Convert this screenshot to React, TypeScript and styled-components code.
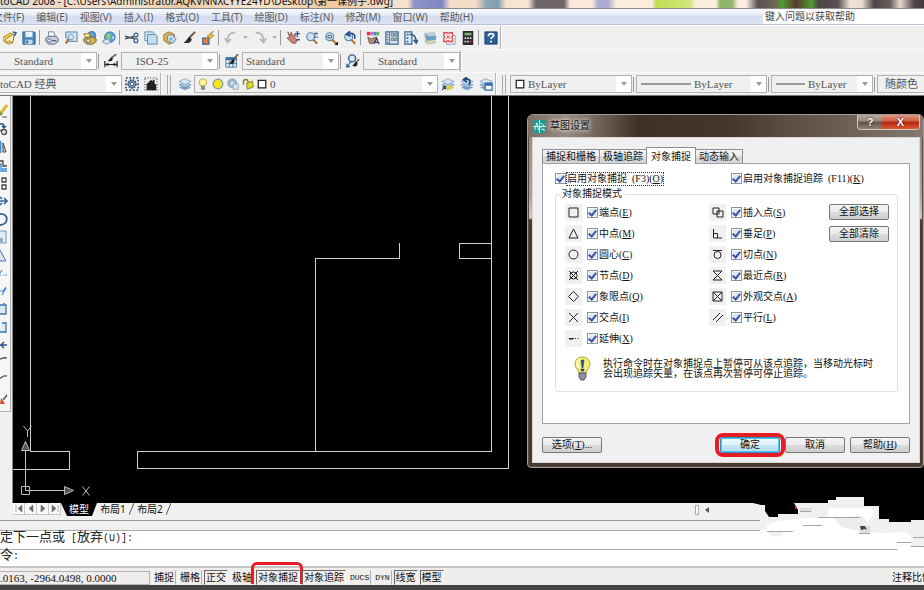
import React from 'react';
import styled, { createGlobalStyle, css } from 'styled-components';

const SONG = '"Liberation Serif", "Noto Sans CJK SC", serif';
const UI = '"Noto Sans", "Noto Sans CJK SC", sans-serif';
const MONO = '"Liberation Mono", "Noto Sans CJK SC", monospace';

const GlobalStyle = createGlobalStyle`
  * { box-sizing: border-box; }
  html, body { margin: 0; height: 100%; overflow: hidden; }
  button, select, input { font: inherit; color: inherit; margin: 0; padding: 0; }
`;

const Page = styled.div`
  position: relative;
  display: flex;
  flex-direction: column;
  height: 100vh;
  overflow: hidden;
  background: #f0f0f0;
  font: 10px/12px ${SONG};
  color: #111;
  svg { display: block; flex: none; }
`;

/* ---------- window chrome ---------- */

const TitleBar = styled.header`
  display: flex;
  align-items: flex-end;
  flex: none;
  height: 9px;
  overflow: hidden;
  border-bottom: 1px solid #8c8a8a;
  font: 10px/13px ${UI};
  color: #111;
  white-space: nowrap;
  background: linear-gradient(90deg, #d9dcd8 0, #f3d9c4 60px, #efe3d6 130px, #e9c8a4 180px, #f5e4d2 250px,
    #f1c9a0 330px, #f6e3d4 400px, #f6dfcb 408px, #8f93c9 414px, #7d86c4 442px, #f5ddc8 450px, #f6dcc6 476px,
    #8da9b4 486px, #7f9fb0 498px, #f7e0cc 506px, #f8e6d6 528px, #6f6468 536px, #6f6468 564px, #fae9da 570px,
    #fae9da 592px, #a9acd0 598px, #a9acd0 608px, #fcecdc 616px, #fcecdc 652px, #bfdd55 656px, #d3e67c 690px,
    #fbeedd 696px, #fbeedd 716px, #8fb56a 720px, #8fb56a 732px, #fbeee0 738px, #fbeee0 746px, #565056 758px,
    #71684f 776px, #4f9c31 782px, #5b3a30 796px, #4f9c31 812px, #4a4547 818px, #57504f 838px, #f2e4d8 850px,
    #e9dccf 862px, #4e4747 874px, #675d5a 890px, #e8d9cd 900px, #504848 914px, #3f3939 924px);
`;

const MenuBar = styled.nav`
  display: flex;
  align-items: center;
  flex: none;
  height: 16px;
  background: linear-gradient(#f8fafd 0, #e9eef8 35%, #d5ddf0 50%, #dbe3f4 100%);
  border-bottom: 1px solid #b9c3d8;
  font: 10px/14px ${UI};
  color: #5a5a5a;
`;

const MenuList = styled.div`
  display: flex;
  gap: 12px;
  margin-left: -7px;
  flex: 1;
`;

const MenuItem = styled.button`
  border: 0;
  background: none;
  white-space: nowrap;
`;

const HelpBox = styled.input`
  width: 161px;
  height: 14px;
  border: 0;
  padding-left: 2px;
  background: #fff;
  font: 10px/14px ${SONG};
  &::placeholder { color: #444; opacity: 1; }
`;

const ToolRow = styled.div<{ $h: number }>`
  display: flex;
  align-items: center;
  flex: none;
  height: ${p => p.$h}px;
  border-top: 1px solid #fafafa;
`;

const ToolBar = styled.div<{ $last?: boolean }>`
  display: flex;
  align-items: center;
  align-self: stretch;
  ${p => !p.$last && css`border-right: 1px solid #b4b4b4; box-shadow: 1px 0 #fff;`}
`;

const ToolButton = styled.button<{ $w?: number }>`
  display: grid;
  place-items: center;
  width: ${p => p.$w ?? 19}px;
  height: 18px;
  border: 0;
  background: none;
`;

const Rule = styled.span`
  width: 1px;
  height: 15px;
  margin: 0 2px 0 1px;
  background: #999;
`;

const Grip = styled.span`
  width: 4px;
  height: 19px;
  border: solid #aaa;
  border-width: 0 1px;
  margin: 0 4px 0 6px;
`;

const ComboBox = styled.label<{ $w: number; $pad?: number; $open?: boolean }>`
  display: flex;
  align-items: center;
  width: ${p => p.$w}px;
  height: 18px;
  padding-left: ${p => p.$pad ?? 4}px;
  border: 1px solid #b2b2b2;
  ${p => p.$open && css`border-left: 0;`}
  background: #f0f0f0;
  font: 11px/14px ${SONG};
  color: #555;
  gap: 3px;
`;

const ComboSelect = styled.select`
  flex: 1;
  min-width: 0;
  height: 16px;
  appearance: none;
  border: 0;
  background: none;
`;

const ComboArrow = styled.span`
  display: grid;
  place-items: center;
  width: 15px;
  height: 16px;
  background: #fff;
`;

function Combo({ value, label, w, pad, open, arrow = true, children }: any) {
  return (
    <ComboBox $w={w} $pad={pad} $open={open}>
      {children}
      <ComboSelect aria-label={label} defaultValue={value}>
        <option>{value}</option>
      </ComboSelect>
      {arrow && (
        <ComboArrow>
          <svg width="6" height="4"><path d="M0 0h6L3 4z" fill="#999" /></svg>
        </ComboArrow>
      )}
    </ComboBox>
  );
}

/* ---------- icons ---------- */

const lens = (
  <>
    <path d="M9.5 10l4.5 4.5" stroke="#b07b35" strokeWidth="2.6" />
    <circle cx="6.5" cy="6.5" r="4.5" fill="#cfe4f3" stroke="#5f87a8" strokeWidth="1.4" />
  </>
);

const stack = (
  <>
    <path d="M8 9l7 3-7 3-7-3z" fill="#7b9fc4" />
    <path d="M8 6l7 3-7 3-7-3z" fill="#a9c4df" stroke="#5b83ad" strokeWidth=".6" />
    <path d="M8 2l7 3-7 4-7-4z" fill="#d4e3f1" stroke="#5b83ad" strokeWidth=".6" />
  </>
);

const brush = (
  <>
    <path d="M15 1L8 8" stroke="#6a5646" strokeWidth="2.2" />
    <path d="M9 7c-3 0-3 4-7 6 4 2 9 0 9-4z" fill="#2a2625" />
  </>
);

const ICONS: Record<string, React.ReactNode> = {
  open: (
    <>
      <path d="M0 7l9-5 2 2v9l-4 2-7-4z" fill="#f0d166" stroke="#a78123" />
      <path d="M3 9l10-6-2 11-4-3-3 3z" fill="#fff3bb" stroke="#8d6c18" />
      <path d="M11 1l4 1-2 4" fill="none" stroke="#315f93" strokeWidth="1.6" />
    </>
  ),
  save: (
    <>
      <path d="M1 1h13l1 1v13H1z" fill="#4f86b9" stroke="#2c5c8c" />
      <path d="M4 1h8v6H4z" fill="#e9f2f9" />
      <path d="M4 10h8v5H4z" fill="#c5d8e8" />
      <path d="M5 11h2v3H5z" fill="#2c5c8c" />
    </>
  ),
  print: (
    <>
      <path d="M4 1h6l2 6H4z" fill="#fff" stroke="#667a99" />
      <path d="M1 8l3-2h9l2 3v3l-4 3H4l-3-3z" fill="#c9cfdd" stroke="#546079" />
      <circle cx="5" cy="11" r="2" fill="#eef" stroke="#546079" />
      <path d="M8 11h5" stroke="#546079" strokeWidth="1.4" />
    </>
  ),
  preview: (
    <>
      <path d="M2 1h13v11H6l-4-4z" fill="#b9d6ea" stroke="#5785ad" />
      <path d="M4 3h9v7H6z" fill="#e3f1fa" />
      <path d="M6 9l-4 5" stroke="#a56b3a" strokeWidth="2.4" />
      <circle cx="8" cy="7" r="3" fill="#d7ebf7" stroke="#668fb0" />
    </>
  ),
  publish: (
    <>
      <circle cx="10" cy="5" r="4.5" fill="#5e9fd0" stroke="#2c659b" />
      <path d="M1 3h6l2 5H3z" fill="#ffe58a" stroke="#9b7a20" />
      <path d="M1 9l4-2h7l3 2v3l-4 3H5l-4-3z" fill="#d3b84f" stroke="#5c4f30" />
      <circle cx="6" cy="11" r="2" fill="#fff" stroke="#5c4f30" />
    </>
  ),
  globe: (
    <>
      <circle cx="9" cy="7" r="6" fill="#5a9fd8" stroke="#2d6ca5" />
      <path d="M5 4c2-2 5-1 5 1s-2 2-1 4-4 1-4-1z" fill="#8ccf73" />
      <path d="M11 7l3-1-1 4z" fill="#e3f5d9" />
      <path d="M1 11l5-2 4 3-4 3-5-2z" fill="#dfe8f1" stroke="#7189a5" />
    </>
  ),
  cut: (
    <>
      <path d="M0 6l11 3M0 9l11-3" stroke="#3d4b5c" strokeWidth="1.5" />
      <circle cx="12.5" cy="4.5" r="2.2" fill="none" stroke="#3b5d87" strokeWidth="1.4" />
      <circle cx="12.5" cy="11" r="2.2" fill="none" stroke="#3b5d87" strokeWidth="1.4" />
    </>
  ),
  copy: (
    <>
      <path d="M1 1h9l2 2v8H1z" fill="#d7e7f4" stroke="#4f82b2" />
      <path d="M4 4h9l2 2v9H4z" fill="#c4dcee" stroke="#4f82b2" />
    </>
  ),
  paste: (
    <>
      <path d="M1 4l6-3 6 3v8l-6 3-6-4z" fill="#e8b84c" stroke="#8b6721" />
      <path d="M5 5l5-1 5 5-4 5-6-3z" fill="#cde0f0" stroke="#4f7aa4" />
      <circle cx="9" cy="9" r="2" fill="#8bb0d0" />
    </>
  ),
  brush,
  match: (
    <>
      <path d="M2 8h7v7H2z" fill="#f07f3c" stroke="#355f90" strokeWidth="1.4" />
      <path d="M14 0L7 6l3 1-3 5 8-7-4-1z" fill="#f5c93b" stroke="#8b5f15" strokeWidth=".7" />
    </>
  ),
  undo: <path d="M13 2C6 1 4 6 4 12M1 8l3 5 4-4" fill="none" stroke="#b5b5b5" strokeWidth="2" />,
  redo: <path d="M3 2c7-1 9 4 9 10M8 9l4 4 3-5" fill="none" stroke="#b5b5b5" strokeWidth="2" />,
  pan: (
    <>
      <path d="M2 1l3 4 1-4 2 5 3-3-1 5 3 2-2 4H7L1 8l3-1z" fill="#c9827a" stroke="#7b4a49" strokeWidth=".8" />
      <path d="M13 0v7M10 3h6M12 10h4" stroke="#2f5c90" strokeWidth="1.5" />
    </>
  ),
  zoom: <>{lens}<path d="M10 3h5M12.5 1v4M10 7h5" stroke="#2f5c90" /></>,
  zoomwin: <>{lens}<path d="M4.5 5h4v3h-4z" fill="none" stroke="#355b80" /><path d="M16 12v4h-4z" fill="#111" /></>,
  zoomprev: <>{lens}<path d="M13 9c2-5-2-8-8-5M8 0L4 4l5 2" fill="none" stroke="#22508a" strokeWidth="1.8" /></>,
  props: (
    <>
      <path d="M1 1h4v4H1z" fill="#e33" /><path d="M5 1h4v4H5z" fill="#d6c" />
      <path d="M9 1h3v4H9z" fill="#48d" /><path d="M12 1h3v4h-3z" fill="#5b4" />
      <path d="M2 7l4 2 5-2 2 2-5 5H4z" fill="#b98c70" stroke="#6e4e42" />
      <path d="M9 15l3-7 3 7M10 13h4" fill="none" stroke="#243e66" strokeWidth="1.3" />
    </>
  ),
  center: (
    <>
      <path d="M1 1h14v14H1z" fill="#dce8f2" stroke="#3c6898" strokeWidth="1.4" />
      <path d="M5 1v14" stroke="#3c6898" />
      <path d="M2 4h2M2 7h2M2 10h2M2 13h2" stroke="#254f7e" />
      <path d="M7 3h3v3H7zM11 3h3v3h-3zM7 8h3v3H7zM11 8h3v3h-3z" fill="#b4bf86" stroke="#3b5e83" strokeWidth=".7" />
    </>
  ),
  palette: (
    <>
      <path d="M1 1h8v14H1z" fill="#dce8f2" stroke="#3c6898" strokeWidth="1.4" />
      <path d="M3 3h2v2H3zM3 7h2v2H3zM3 11h2v2H3z" fill="#3c6898" />
      <path d="M6 4c6-1 8 4 8 9M11 10l3 4 2-4" fill="none" stroke="#28558b" strokeWidth="1.6" />
    </>
  ),
  sheet: (
    <>
      <path d="M1 2l13-1v9L3 14z" fill="#b7cad6" />
      <path d="M2 3c4 4 8 3 13 2v5L4 11z" fill="#6b9ec2" />
      <path d="M2 12l10-2 3 3-9 2z" fill="#d9d6b0" stroke="#8b9fa8" strokeWidth=".6" />
    </>
  ),
  markup: (
    <>
      <path d="M5 5h10v10H5z" fill="#eee" stroke="#8898a8" />
      <path d="M2 2h4l1 1 2-1h3v4l-1 1 1 2v3H8L7 11l-2 1H2V8l1-1-1-2z" fill="#fdeeee" stroke="#e04e57" strokeWidth="1.5" />
      <path d="M5 5l4 4M9 5L5 9" stroke="#d33" />
    </>
  ),
  calc: (
    <>
      <path d="M2 0h12v16H2z" fill="#2d2a2a" />
      <path d="M4 2h8v3H4z" fill="#77b57a" />
      <path d="M4 7h2v2H4zM7 7h2v2H7zM10 7h2v2h-2zM4 11h2v2H4zM7 11h2v2H7z" fill="#d9d9d9" />
      <path d="M10 11h2v2h-2z" fill="#d33" />
    </>
  ),
  help: (
    <>
      <path d="M1 1h14v14H1z" fill="#2a6096" stroke="#174170" />
      <path d="M5 6c0-4 6-4 6-1 0 2-3 2-3 4M8 11v2" fill="none" stroke="#fff" strokeWidth="2" />
    </>
  ),
  dimstyle: (
    <>
      <path d="M1 8v7M15 8v7M1 12h14" stroke="#222" strokeWidth="1.4" />
      <path d="M1 12l4-2v4zM15 12l-4-2v4z" fill="#222" />
      <path d="M14 0L8 5" stroke="#7a614e" strokeWidth="2" /><path d="M9 4c-3 1-3 3-5 4 3 1 6 0 6-3z" fill="#222" />
    </>
  ),
  tablestyle: (
    <>
      <path d="M1 4h12v11H1z" fill="#e5f0f8" stroke="#3c75ac" />
      <path d="M1 4h12v3H1z" fill="#3c75ac" />
      <path d="M1 11h12M5 7v8M9 7v8" stroke="#3c75ac" />
      <path d="M15 0L9 7" stroke="#7a614e" strokeWidth="2" /><path d="M10 6c-3 0-3 3-5 5 4 1 6-1 6-4z" fill="#222" />
    </>
  ),
  leader: (
    <>
      <circle cx="7" cy="5" r="4" fill="#dbe9f4" stroke="#2f6398" strokeWidth="1.6" />
      <path d="M1 15l5-7M1 11v4l4-1" fill="none" stroke="#2f6398" strokeWidth="1.4" />
      <path d="M15 6l-4 4" stroke="#7a614e" strokeWidth="2" /><path d="M12 9c-3 0-2 3-5 4 4 3 7 0 6-3z" fill="#222" />
    </>
  ),
  gear: (
    <>
      <path d="M1 1h14v14H1z" fill="none" stroke="#3a5675" strokeWidth="2" strokeDasharray="2 2" />
      <circle cx="8" cy="8" r="4.5" fill="#8aa4bb" stroke="#33506f" strokeWidth="2" strokeDasharray="2 1" />
      <circle cx="8" cy="8" r="2" fill="#f0f0f0" stroke="#33506f" />
    </>
  ),
  home: (
    <>
      <path d="M1 1h14v14H1z" fill="none" stroke="#777" strokeWidth="2" strokeDasharray="1 2" />
      <path d="M2 9l6-6 2 2V3h2v4l2 2v6H3V9z" fill="#222" />
    </>
  ),
  layers: stack,
  bulb: (
    <>
      <circle cx="8" cy="6" r="5" fill="#fff59b" stroke="#a89436" />
      <path d="M6 11h4v4H6z" fill="#9d9d9d" stroke="#666" />
    </>
  ),
  sun: <circle cx="8" cy="8" r="6.5" fill="#f6e21e" stroke="#7b9bb0" strokeWidth="1.6" />,
  freeze: (
    <>
      <circle cx="7" cy="7" r="6" fill="#9bb9cf" stroke="#5c86a6" strokeDasharray="2 1" />
      <circle cx="7" cy="7" r="2.5" fill="#d8e6ef" />
      <path d="M8 8h7v7H8z" fill="#dbe7ef" stroke="#7795ac" />
    </>
  ),
  lock: (
    <>
      <path d="M2 9V5c0-4 6-4 6 0v3" fill="none" stroke="#84881e" strokeWidth="2" />
      <path d="M6 7l8-3 1 8-8 3z" fill="#d8d92b" stroke="#6d7118" />
    </>
  ),
  box: <path d="M2 2h12v12H2z" fill="#fff" stroke="#222" strokeWidth="2" />,
  layerprev: (
    <>
      {stack}
      <path d="M8 9l7 3-7 3-4-2z" fill="#e3cf3f" />
      <path d="M1 15l4-4M2 11h3v3" fill="none" stroke="#1f4b80" strokeWidth="1.4" />
    </>
  ),
  layerundo: <>{stack}<path d="M10 9c3-5 0-8-5-6M8 0L4 3l4 3" fill="none" stroke="#1f4b80" strokeWidth="2" /></>,
  layerstate: (
    <>
      {stack}
      <path d="M7 7h8v8H7z" fill="#fff" stroke="#2f6ba5" strokeWidth="1.4" /><path d="M7 7h8v3H7z" fill="#2f6ba5" />
    </>
  ),
};

function Icon({ name, size = 14 }: { name: string; size?: number }) {
  return <svg width={size} height={size} viewBox="0 0 16 16" fill="none">{ICONS[name]}</svg>;
}

const STANDARD_TOOLS = [
  'open', 'save', '|', 'print', 'preview', 'publish', 'globe', '|', 'cut', 'copy', 'paste', 'brush', 'match', '|',
  'undo', 'v', 'redo', 'v', '|', 'pan', 'zoom', 'zoomwin', 'zoomprev', '|',
  'props', 'center', 'palette', 'sheet', 'markup', 'calc', '|', 'help',
];

function StandardTools() {
  return (
    <>
      {STANDARD_TOOLS.map((t, i) => {
        if (t === '|') return <Rule key={i} />;
        if (t === 'v') {
          return (
            <ToolButton key={i} $w={10} aria-label="history">
              <svg width="5" height="3"><path d="M0 0h5L2.500 3z" fill="#b0b0b0" /></svg>
            </ToolButton>
          );
        }
        return <ToolButton key={i} aria-label={t}><Icon name={t} /></ToolButton>;
      })}
    </>
  );
}

/* ---------- work area ---------- */

const Work = styled.main`
  display: flex;
  flex: 1;
  min-height: 0;
  border-top: 1px solid #777;
`;

const SideDock = styled.div`
  width: 12px;
  flex: none;
`;

const SideBar = styled.div`
  display: flex;
  flex-direction: column;
  width: 11px;
  padding: 6px 0 3px;
  border: solid #b0b0b0;
  border-width: 0 1px 1px 0;
  background: #f6f6f6;
`;

const SideButton = styled.button`
  width: 8px;
  height: 18px;
  border: 0;
  background: none;
`;

const SIDE_ICONS: React.ReactNode[] = [
  <><path d="M7 1L1 9" stroke="#e2b92d" strokeWidth="3" /><path d="M0 7l3 3-3 2z" fill="#69a356" /><path d="M2 13h5" stroke="#555" /></>,
  <><path d="M0 2c3-1 4 1 4 3M2 4l2 2 2-2" stroke="#23548c" strokeWidth="1.5" /><circle cx="4" cy="10" r="2.5" stroke="#555" strokeWidth="1.4" /><path d="M0 9l2-2" stroke="#555" /></>,
  <><path d="M.5 1v12" stroke="#4b92d6" strokeWidth="2" /><path d="M3 3l3 9H3z" fill="#ddd" stroke="#444" /></>,
  <><path d="M0 3h3v5h4" fill="none" stroke="#444" strokeWidth="1.3" /><path d="M0 6h1v5h6M0 13h7" fill="none" stroke="#3c8add" strokeWidth="1.3" /></>,
  <path d="M2 2h4v4H2zM2 9h4v4H2z" stroke="#444" strokeWidth="1.3" />,
  <path d="M0 7h6M4 4l3 3-3 3M0 3l2 2M0 11l2-2" fill="none" stroke="#3a6695" strokeWidth="1.6" />,
  <path d="M0 2c9-1 9 11 0 11" fill="none" stroke="#3a6695" strokeWidth="1.8" />,
  <><path d="M-1 1h7v12h-7" fill="#e3eefa" stroke="#6d93bb" /><path d="M0 8h3v4H0z" fill="#9aa9b9" /></>,
  <path d="M0 2l6 11h-7" fill="#d7e5f3" stroke="#4673a2" />,
  <path d="M0 7l2-3M0 9h1M3 9h1M5 9h2" stroke="#3c8add" strokeWidth="1.2" />,
  <path d="M0 7h3l3-4M2 11l4-7" stroke="#3c8add" strokeWidth="1.2" />,
  <><path d="M-1 3h7v9h-7" fill="#dceaf6" stroke="#4673a2" strokeWidth="1.3" /><path d="M3 2h2" stroke="#39f" strokeWidth="2" /></>,
  <><path d="M-1 12h7V3H3" fill="#dceaf6" stroke="#4673a2" strokeWidth="1.3" /><path d="M2 3h2" stroke="#39f" strokeWidth="2" /></>,
  <path d="M0 7h7M4 4L1 7l3 3" stroke="#23548c" strokeWidth="1.5" />,
  <path d="M0 3c2 0 2-2 7-1" stroke="#555" strokeWidth="1.3" />,
  <path d="M0 4c2 0 2-3 7-2" stroke="#555" strokeWidth="1.3" />,
  <><path d="M1 6l4 6H0z" fill="#d64a2c" /><path d="M3 8l4-5" stroke="#555" strokeWidth="1.4" /></>,
];

const Drawing = styled.div`
  flex: 1;
  min-width: 0;
  background: #000;
  border-left: 1px solid #888;
`;

function FloorPlan() {
  return (
    <svg width="100%" height="100%" fill="none" stroke="#d0d0d0" shapeRendering="crispEdges">
      <path d="M17.500 0V355.500H56.500V373.500H0" />
      <path d="M124.500 372.500H495.500V0M124.500 372.500V355.500H478.500V0" />
      <path d="M478.500 147.500H446.500V162.500H478.500" />
      <path d="M386.500 147V162.500H302.500V355" />
      <g shapeRendering="auto" stroke="#bdbdbd">
        <path d="M8.500 390.500h8v8h-8zM12.500 394.500V353M12.500 394.500H60" />
        <path d="M8.500 354.500h8l-4-9zM51.500 390.500v8l9-4z" fill="#555" />
        <path d="M10.500 330l4 5 4-5M14.500 335v6M69.500 390.500l7 9M76.500 390.500l-7 9" />
      </g>
    </svg>
  );
}

const LayoutBar = styled.div`
  display: flex;
  flex: none;
  height: 14px;
  margin-left: 13px;
  font: 10px/13px ${UI};
`;

const NavButton = styled.button`
  display: grid;
  place-items: center;
  width: 12px;
  height: 12px;
  border: solid #c4c4c4;
  border-width: 0 1px 1px 0;
  background: #f8f8f8;
`;

const LayoutTab = styled.button<{ $active?: boolean }>`
  width: ${p => (p.$active ? 36 : 32)}px;
  height: 13px;
  border: 0;
  background: none;
  white-space: nowrap;
  ${p => p.$active && css`
    background: #000;
    color: #fff;
    clip-path: polygon(0 0, 100% 0, calc(100% - 5px) 100%, 6px 100%);
  `}
`;

const Slash = () => <svg width="5" height="13"><path d="M0 12L5 0" stroke="#555" /></svg>;

const ScrollArea = styled.div`
  display: flex;
  flex: 1;
  justify-content: flex-end;
  align-items: center;
  padding-right: 214px;
  gap: 6px;
`;

const SplitHandle = styled.span`
  width: 4px;
  height: 10px;
  border: 1px solid #aaa;
  background: #fff;
`;

const CommandPane = styled.section`
  flex: none;
  margin-top: 3px;
  border-top: 1px solid #999;
  padding-top: 9px;
  font: 13px/18px ${MONO};
  color: #222;
`;

const CommandLine = styled.div<{ $h: number }>`
  height: ${p => p.$h}px;
  background: #fff;
  border-top: 1px solid #aaa;
  line-height: ${p => p.$h - 5}px;
  white-space: pre;
`;

const Narrow = styled.span`
  font-size: 10px;
`;

const StatusBar = styled.footer`
  display: flex;
  align-items: flex-end;
  flex: none;
  height: 24px;
  padding-bottom: 5px;
  border-top: 2px solid #c6c6c6;
  background: linear-gradient(#f0eded calc(100% - 5px), #444 calc(100% - 5px));
  gap: 2px;
`;

const Coordinates = styled.output`
  width: 150px;
  height: 14px;
  border: 1px solid #b6b0b0;
  border-left: 0;
  font: 11px/13px ${SONG};
`;

const StatusButton = styled.button<{ $on?: boolean; $latin?: boolean }>`
  position: relative;
  height: 15px;
  padding: 0 1px;
  border: 1px solid;
  border-color: ${p => (p.$on ? '#666 #f8f8f8 #f0eded #666' : '#f0eded #b5b0b0 #f0eded #f8f8f8')};
  background: none;
  line-height: 13px;
  white-space: nowrap;
  ${p => p.$latin && css`font: 8px/13px ${MONO};`}
`;

const StatusMark = styled.span`
  position: absolute;
  inset: -9px -4px 0 -6px;
  border: 3px solid #e81c24;
  border-bottom: 0;
  border-radius: 6px 6px 0 0;
`;

const Scale = styled.span`
  margin-left: auto;
  width: 32px;
  overflow: hidden;
  white-space: nowrap;
  font: 10px/15px ${UI};
`;

const Erasure = styled.div`
  position: absolute;
  right: 0;
  bottom: 24px;
`;

/* ---------- dialog ---------- */

const Dialog = styled.section`
  position: absolute;
  top: 114px;
  right: 0;
  display: flex;
  flex-direction: column;
  width: 397px;
  padding: 0 3px 4px 4px;
  border: 1px solid #a39a92;
  border-radius: 6px 6px 4px 4px;
  background: linear-gradient(#8f867e 0, #a9a29c 80px, #cfcac6 103px, #4a392e 105px, #4a392e 100%);
  box-shadow: inset 0 0 0 1px #5b4a40;
`;

const DialogTitle = styled.div`
  display: flex;
  align-items: center;
  height: 22px;
  margin: 0 -3px 0 -4px;
  padding-left: 5px;
  gap: 4px;
  border-radius: 6px 6px 0 0;
  background: linear-gradient(90deg, #7d7067 0, #978b82 40px, #6d5d51 75px, #413025 110px, #46352b 200px, #5d4d42 260px, #857970 397px);
  font: 10px/14px ${SONG};
  text-shadow: 0 0 5px #fff, 0 0 3px #ddd;
`;

const CaptionButtons = styled.div`
  display: flex;
  align-self: flex-start;
  margin-left: auto;
  margin-right: 3px;
  border: 1px solid #d0c8c2;
  border-top: 0;
  border-radius: 0 0 4px 4px;
  overflow: hidden;
`;

const CaptionButton = styled.button<{ $close?: boolean }>`
  width: ${p => (p.$close ? 37 : 24)}px;
  height: 14px;
  border: 0;
  color: #fff;
  font: bold 11px/13px "Liberation Sans", sans-serif;
  text-shadow: 0 0 2px #000;
  background: ${p => (p.$close
    ? 'linear-gradient(#e09a87 0, #cf5a43 45%, #b5240f 50%, #dd5a32 100%)'
    : 'linear-gradient(#b5aaa2 0, #93877e 45%, #5f5148 50%, #8f8379 100%)')};
`;

const Client = styled.div`
  padding: 9px;
  border: 1px solid #d9d5d2;
  background: #f0f0f0;
`;

const Tabs = styled.div`
  display: flex;
  align-items: flex-end;
`;

const Tab = styled.button<{ $active?: boolean }>`
  position: relative;
  height: 14px;
  padding: 0 3px;
  border: 1px solid #8e8f94;
  border-bottom: 0;
  margin-right: -1px;
  background: linear-gradient(#f4f4f4 0, #ececec 50%, #dcdcdc 50%, #d3d3d3 100%);
  line-height: 13px;
  white-space: nowrap;
  ${p => p.$active && css`
    height: 17px;
    margin-bottom: -1px;
    padding: 0 4px;
    background: #fff;
  `}
`;

const Panel = styled.div`
  padding: 8px 11px 31px 12px;
  border: 1px solid #a0a3ab;
  background: #fff;
`;

const TopChecks = styled.div`
  display: grid;
  grid-template-columns: 176px 1fr;
  height: 13px;
`;

const CheckLabel = styled.label<{ $focus?: boolean }>`
  display: flex;
  align-items: center;
  gap: 1px;
  line-height: 12px;
  white-space: pre;
  span { ${p => p.$focus && css`outline: 1px dotted #333;`} }
`;

const CheckInput = styled.input`
  appearance: none;
  display: grid;
  place-items: center;
  width: 11px;
  height: 11px;
  border: 1px solid #8a949f;
  background: #dfe6f0;
  box-shadow: inset 0 0 0 1px #f6f8fb;
  &:checked::after {
    content: '';
    width: 3px;
    height: 6px;
    margin-top: -2px;
    border: solid #3a55a8;
    border-width: 0 2px 2px 0;
    transform: rotate(40deg);
  }
`;

function Check({ text, mnemonic, focus }: { text: string; mnemonic: string; focus?: boolean }) {
  return (
    <CheckLabel $focus={focus}>
      <CheckInput type="checkbox" defaultChecked />
      <span>{text}(<u>{mnemonic}</u>)</span>
    </CheckLabel>
  );
}

const Group = styled.fieldset`
  min-width: 0;
  margin: 3px 0 0;
  padding: 4px 8px 10px 9px;
  border: 1px solid #d9e3ea;
  border-radius: 3px;
`;

const Legend = styled.legend`
  margin-left: -5px;
  padding: 0 2px;
  line-height: 12px;
`;

const Modes = styled.div`
  display: grid;
  grid-template-columns: 144px 1fr 60px;
`;

const ModeColumn = styled.div`
  display: flex;
  flex-direction: column;
  gap: 4px;
`;

const ModeRow = styled.div`
  display: flex;
  align-items: center;
  gap: 5px;
`;

const Glyph = styled.span`
  display: grid;
  place-items: center;
  width: 17px;
  height: 17px;
  background: #f0f0f0;
`;

const Actions = styled.div`
  display: flex;
  flex-direction: column;
  gap: 6px;
`;

const PushButton = styled.button<{ $default?: boolean }>`
  position: relative;
  width: 60px;
  height: 16px;
  border: 1px solid #777;
  border-radius: 2px;
  background: linear-gradient(#f4f4f4 0, #ebebeb 50%, #dcdcdc 50%, #cfcfcf 100%);
  line-height: 14px;
  white-space: nowrap;
  ${p => p.$default && css`
    border-color: #2c92c4;
    box-shadow: inset 0 0 0 1px #4cc8f0;
    background: linear-gradient(#eef8fc 0, #dff1fa 50%, #c4e5f5 50%, #b5dcf0 100%);
  `}
`;

const ButtonMark = styled.span`
  position: absolute;
  inset: -5px -6px;
  border: 4px solid #e81c24;
  border-radius: 8px;
`;

const Tip = styled.div`
  display: flex;
  align-items: center;
  gap: 12px;
  margin: 9px 0 0 9px;
`;

const TipText = styled.p`
  margin: 0;
  line-height: 10px;
  white-space: nowrap;
`;

const Footer = styled.div`
  display: flex;
  gap: 5px;
  margin-top: 13px;
`;

const Spacer = styled.span`
  flex: 1;
`;

const LEFT_MODES = [
  ['端点', 'E', 'M3 3h9v9H3z'],
  ['中点', 'M', 'M7.5 3L12 12H3z'],
  ['圆心', 'C', 'M3 7.5a4.5 4.5 0 1 0 9 0a4.5 4.5 0 1 0-9 0'],
  ['节点', 'D', 'M4 7.5a3.500 3.500 0 1 0 7 0a3.500 3.500 0 1 0-7 0M3 3l9 9M12 3l-9 9'],
  ['象限点', 'Q', 'M7.5 2.5l5 5-5 5-5-5z'],
  ['交点', 'I', 'M3 3l9 9M12 3l-9 9'],
  ['延伸', 'X', 'M3 7.5h5M9 7.5h1M11.5 7.5h1M3 8h4'],
];

const RIGHT_MODES = [
  ['插入点', 'S', 'M3 3h6v3h4v6H7V9H3zM7 9V6h2M9 6v3H7'],
  ['垂足', 'P', 'M3.5 3v9H12M3.5 7.5h4V12'],
  ['切点', 'N', 'M3 3.5h9M4 8a3.500 3.500 0 1 0 7 0a3.500 3.500 0 1 0-7 0'],
  ['最近点', 'R', 'M3 3h9L3 12h9z'],
  ['外观交点', 'A', 'M3 3h9v9H3zM3 3l9 9M12 3l-9 9'],
  ['平行', 'L', 'M3 10l7-7M6 12l7-7'],
];

function ModeList({ modes }: { modes: string[][] }) {
  return (
    <ModeColumn>
      {modes.map(([text, key, d]) => (
        <ModeRow key={key}>
          <Glyph><svg width="15" height="15"><path d={d} fill="none" stroke="#222" /></svg></Glyph>
          <Check text={text} mnemonic={key} />
        </ModeRow>
      ))}
    </ModeColumn>
  );
}

function SettingsDialog() {
  return (
    <Dialog role="dialog" aria-label="草图设置">
      <DialogTitle>
        <svg width="13" height="13" viewBox="0 0 14 14">
          <path d="M0 0h14v14H0z" fill="#1d9c94" />
          <path d="M7 0v14M0 7h14" stroke="#d8f2ef" />
          <path d="M2 11l2-8 2 8M8 3l4 3-4 2M9 10h3v2" fill="none" stroke="#e9fbf8" />
        </svg>
        <span>草图设置</span>
        <CaptionButtons>
          <CaptionButton aria-label="help">?</CaptionButton>
          <CaptionButton $close aria-label="close">X</CaptionButton>
        </CaptionButtons>
      </DialogTitle>
      <Client>
        <Tabs role="tablist">
          <Tab role="tab">捕捉和栅格</Tab>
          <Tab role="tab">极轴追踪</Tab>
          <Tab role="tab" $active aria-selected>对象捕捉</Tab>
          <Tab role="tab">动态输入</Tab>
        </Tabs>
        <Panel>
          <TopChecks>
            <Check text="启用对象捕捉  (F3)" mnemonic="O" focus />
            <Check text="启用对象捕捉追踪  (F11)" mnemonic="K" />
          </TopChecks>
          <Group>
            <Legend>对象捕捉模式</Legend>
            <Modes>
              <ModeList modes={LEFT_MODES} />
              <ModeList modes={RIGHT_MODES} />
              <Actions>
                <PushButton>全部选择</PushButton>
                <PushButton>全部清除</PushButton>
              </Actions>
            </Modes>
            <Tip>
              <svg width="17" height="25" viewBox="0 0 17 25">
                <path d="M8.5 1C4 1 1 4 1 8c0 4 4 6 4 9h7c0-3 4-5 4-9 0-4-3-7-7.5-7z" fill="#f7ee74" stroke="#b5a12c" />
                <path d="M6 3c-3 2-4 6-1 9" fill="none" stroke="#fffde0" strokeWidth="2" />
                <path d="M5 17h7v4l-2 3H7l-2-3z" fill="#8c93a3" stroke="#4d5567" />
                <path d="M7 4h3l-1 8H8zM7 13h3v2H7z" fill="#1d4f8f" stroke="#1d4f8f" strokeWidth=".5" />
              </svg>
              <TipText>
                执行命令时在对象捕捉点上暂停可从该点追踪，当移动光标时<br />
                会出现追踪矢量，在该点再次暂停可停止追踪。
              </TipText>
            </Tip>
          </Group>
        </Panel>
        <Footer>
          <PushButton>选项(<u>T</u>)...</PushButton>
          <Spacer />
          <PushButton $default>确定<ButtonMark /></PushButton>
          <PushButton>取消</PushButton>
          <PushButton>帮助(<u>H</u>)</PushButton>
        </Footer>
      </Client>
    </Dialog>
  );
}

/* ---------- application ---------- */

const MENUS = ['文件(F)', '编辑(E)', '视图(V)', '插入(I)', '格式(O)', '工具(T)', '绘图(D)', '标注(N)', '修改(M)', '窗口(W)', '帮助(H)'];

const NAV = ['M3 2v7M9 2v7L5 5.5z', 'M8 2v7L4 5.5z', 'M4 2v7l4-3.500z', 'M9 2v7M3 2v7l4-3.500z'];

const STATUS: [string, boolean][] = [
  ['捕捉', false], ['栅格', false], ['正交', true], ['极轴', false], ['对象捕捉', true],
  ['对象追踪', true], ['DUCS', false], ['DYN', false], ['线宽', true], ['模型', true],
];

const Sample = ({ w }: { w: number }) => <svg width={w} height="2"><path d="M0 1h50" stroke="#444" /></svg>;

export default function App() {
  return (
    <Page>
      <GlobalStyle />
      <TitleBar>toCAD 2008 - [C:\Users\Administrator.AQKVNNXCYYE24YD\Desktop\第一课例子.dwg]</TitleBar>
      <MenuBar>
        <MenuList>{MENUS.map(m => <MenuItem key={m}>{m}</MenuItem>)}</MenuList>
        <HelpBox aria-label="help" placeholder="键入问题以获取帮助" />
      </MenuBar>

      <ToolRow $h={24}>
        <ToolBar><StandardTools /></ToolBar>
      </ToolRow>
      <ToolRow $h={23}>
        <ToolBar>
          <Combo open w={97} pad={14} value="Standard" label="text style" />
          <Rule />
          <ToolButton $w={20} aria-label="dimension style"><Icon name="dimstyle" /></ToolButton>
          <Combo w={97} pad={14} value="ISO-25" label="dimension" />
          <Rule />
          <ToolButton $w={20} aria-label="table style"><Icon name="tablestyle" /></ToolButton>
          <Combo w={97} pad={3} value="Standard" label="table" />
          <Rule />
          <ToolButton $w={20} aria-label="leader style"><Icon name="leader" /></ToolButton>
          <Combo w={97} pad={14} value="Standard" label="leader" />
        </ToolBar>
      </ToolRow>
      <ToolRow $h={23}>
        <ToolBar>
          <Combo open w={122} pad={0} value="toCAD 经典" label="workspace" />
          <ToolButton aria-label="workspace settings"><Icon name="gear" /></ToolButton>
          <ToolButton aria-label="my workspace"><Icon name="home" /></ToolButton>
        </ToolBar>
        <ToolBar>
          <Grip />
          <ToolButton aria-label="layer manager"><Icon name="layers" /></ToolButton>
          <Combo w={244} pad={2} value="0" label="layer">
            <Icon name="bulb" size={12} /><Icon name="sun" size={12} /><Icon name="freeze" size={12} />
            <Icon name="lock" size={12} /><Icon name="box" size={10} />
          </Combo>
          <ToolButton aria-label="layer current"><Icon name="layerprev" /></ToolButton>
          <ToolButton aria-label="layer previous"><Icon name="layerundo" /></ToolButton>
          <ToolButton aria-label="layer states"><Icon name="layerstate" /></ToolButton>
        </ToolBar>
        <ToolBar $last>
          <Grip />
          <Combo w={122} value="ByLayer" label="color"><Icon name="box" size={10} /></Combo>
          <Rule />
          <Combo w={131} value="ByLayer" label="linetype"><Sample w={50} /></Combo>
          <Rule />
          <Combo w={102} value="ByLayer" label="lineweight"><Sample w={29} /></Combo>
          <Rule />
          <Combo w={60} pad={7} arrow={false} value="随颜色" label="plot style" />
        </ToolBar>
      </ToolRow>

      <Work>
        <SideDock>
          <SideBar>
            {SIDE_ICONS.map((icon, i) => (
              <SideButton key={i} aria-label={`modify ${i + 1}`}>
                <svg width="8" height="14" fill="none">{icon}</svg>
              </SideButton>
            ))}
          </SideBar>
        </SideDock>
        <Drawing><FloorPlan /></Drawing>
      </Work>

      <LayoutBar>
        {NAV.map(d => (
          <NavButton key={d} aria-label="layout"><svg width="12" height="11"><path d={d} fill="#666" stroke="#777" strokeWidth=".6" /></svg></NavButton>
        ))}
        <LayoutTab $active>模型</LayoutTab>
        <LayoutTab>布局1</LayoutTab>
        <Slash />
        <LayoutTab>布局2</LayoutTab>
        <Slash />
        <ScrollArea>
          <SplitHandle />
          <svg width="5" height="6"><path d="M4 0v6L0 3z" fill="#555" /></svg>
        </ScrollArea>
      </LayoutBar>

      <CommandPane>
        <CommandLine $h={19}>定下一点或<Narrow> [</Narrow>放弃<Narrow>(U)]:</Narrow></CommandLine>
        <CommandLine $h={17}>令<Narrow>:</Narrow></CommandLine>
      </CommandPane>

      <StatusBar>
        <Coordinates>.0163, -2964.0498, 0.0000</Coordinates>
        {STATUS.map(([text, on]) => (
          <StatusButton key={text} $on={on} $latin={text[0] === 'D'}>
            {text}
            {text === '对象捕捉' && <StatusMark />}
          </StatusButton>
        ))}
        <Scale>注释比例</Scale>
      </StatusBar>

      <Erasure>
        <svg width="174" height="70">
          <path d="M10 10H174V70H10z" fill="#f0f0f0" />
          <path d="M3 7L11 9H15V15L19 21H28V18H48V14L44 7z" fill="#000" />
          <path d="M114 7V10H129V23H139V26H161V24H174V7z" fill="#000" />
          <path d="M78 8V4H86V1H114V11H78z" fill="#f0f0f0" />
          <path d="M10 70V34L17 33V29L28 25L55 22H77L79 12H120L124 16L118 26L113 36L135 37L155 36L174 52V70z" fill="#fff" />
          <path d="M84 22L112 20L118 26L112 36L92 31z" fill="#ececec" />
          <path d="M17 35C21 43 32 42 34 35z" fill="#eee" />
          <path d="M161 35H174V50H161z" fill="#f0f0f0" />
          <path d="M50 15.500H61M68 21.500H110M53 29.500H72M17 35.500H43M109 37.500H120M163 41.500H174M147 46.500H161M161 50.500H174M10 53.500H147" stroke="#a5a5a5" />
          <path d="M50 12H62V15H50zM110 30H120V37H110z" fill="#ddd" />
          <path d="M45 9L47 12L45 14z" fill="#e22" />
          <path d="M110 30h5l2 4-2-1-4 1z" fill="#444" />
        </svg>
      </Erasure>

      <SettingsDialog />
    </Page>
  );
}
